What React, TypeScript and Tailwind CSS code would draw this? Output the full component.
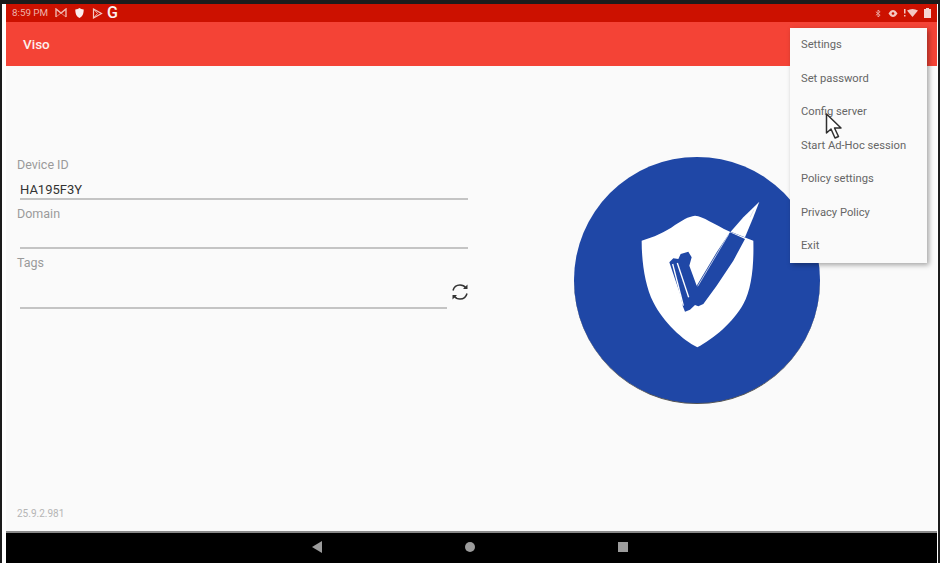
import React from "react";

const font = { fontFamily: '"Roboto", "Liberation Sans", sans-serif' };

function Field({ label, value, icon }: { label: string; value?: string; icon?: boolean }) {
  return (
    <div className="flex flex-col">
      <div className="h-[17px] pl-[11px] text-[12.5px] leading-[13px] text-[#9a9a9a]">{label}</div>
      <div className="flex items-end">
        <div className={`ml-[14px] border-b-2 border-[#c4c4c4] ${icon ? "h-[36px] w-[427px]" : "h-[25px] w-[448px]"}`}>
          {value && <div className="pt-[7px] text-[13px] leading-[16px] text-[#333333]">{value}</div>}
        </div>
        {icon && (
          <svg className="mb-[8px] ml-[5px]" width="16" height="18" viewBox="0 0 16 18" fill="none" stroke="#333" strokeWidth="1.5">
            <path d="M1 7.500C2 3.500 5 2 8 2c2.500 0 4.500 1 6 3" />
            <path d="M15 10.500C14 14.500 11 16 8 16c-2.500 0-4.500-1-6-3" />
            <path d="M15.500 1.500v4.500h-4.500z" fill="#333" stroke="none" />
            <path d="M.5 16.500V12h4.500z" fill="#333" stroke="none" />
          </svg>
        )}
      </div>
    </div>
  );
}

const menu = ["Settings", "Set password", "Config server", "Start Ad-Hoc session", "Policy settings", "Privacy Policy", "Exit"];

export default function App() {
  return (
    <div className="relative h-[563px] w-[940px] overflow-hidden border-x-2 border-t-[4px] border-[#1c1c1c] bg-white" style={font}>
      <div className="ml-[4px] mr-[1px] flex h-[559px] flex-col bg-[#fafafa]">
        <div className="flex h-[18px] items-center justify-between bg-[#cc1100] pl-[6px] pr-[6px]">
          <div className="flex items-center">
            <span className="text-[9.800px] text-[#eeb4ac]">8:59 PM</span>
            <svg className="ml-[7px]" width="12" height="10" viewBox="0 0 12 10" fill="none" stroke="#eeb4ac" strokeWidth="1.400">
              <path d="M1 9V1l5 4 5-4v8" />
              <path d="M1 1l10 8M11 1L1 9" strokeWidth=".7" />
            </svg>
            <svg className="ml-[8px]" width="9" height="10" viewBox="0 0 9 10" fill="#fbeeec">
              <path d="M4.500 0C3.500.8 2 1.300.3 1.400.3 5 1 8 4.500 10 8 8 8.700 5 8.700 1.400 7 1.300 5.500.8 4.500 0z" />
            </svg>
            <svg className="ml-[8px]" width="11" height="11" viewBox="0 0 10 11" fill="none" stroke="#f3c8c2" strokeWidth="1.200">
              <path d="M1 1l8 4.500L1 10z" />
              <path d="M1 1l4 4.500L1 10" strokeWidth=".8" />
            </svg>
            <span className="ml-[4px] text-[16px] font-medium leading-none text-[#fdf3f2]">G</span>
          </div>
          <div className="flex items-center gap-[6px]">
            <svg width="6" height="9" viewBox="0 0 7 9" fill="none" stroke="#eeb4ac" strokeWidth="1">
              <path d="M1 2.500l5 4-2.500 2V.500L6 2.500l-5 4" />
            </svg>
            <svg className="ml-[1px]" width="10" height="7" viewBox="0 0 9 7">
              <path d="M0 3.500C1.500 1 3 0 4.500 0S7.500 1 9 3.500C7.500 6 6 7 4.500 7S1.500 6 0 3.500z" fill="#f3c8c2" />
              <circle cx="4.500" cy="3.500" r="1.300" fill="#cc1100" />
            </svg>
            <svg width="14" height="8" viewBox="0 0 14 8" fill="#f3c8c2">
              <rect x="0" y="0" width="1.500" height="4.500" />
              <rect x="0" y="6" width="1.500" height="1.500" />
              <path d="M3 1.500C6.500 -.5 10.500 -.5 14 1.500L8.500 8z" />
            </svg>
            <svg width="7" height="10" viewBox="0 0 7 10" fill="#f6d6d2">
              <path d="M2 0h3v1h2v9H0V1h2z" />
            </svg>
          </div>
        </div>

        <div className="flex h-[44px] items-center bg-[#f44336] pl-[17px] pt-[1px] text-[13.500px] font-medium text-[#fdeeec]">Viso</div>

        <div className="flex min-h-0 flex-1 flex-col">
          <div className="flex flex-1">
            <div className="flex w-[480px] flex-col pt-[92px]">
              <div className="flex flex-col gap-[7px]">
                <Field label="Device ID" value="HA195F3Y" />
                <Field label="Domain" />
                <Field label="Tags" icon />
              </div>
            </div>
            <div className="ml-[88px] mt-[91px] flex h-[247px] w-[246px] items-center justify-center rounded-full border-b border-[#555] bg-[#1f47a6]">
              <svg className="ml-[6px] mt-[-12px]" width="160" height="170" viewBox="0 0 480 510">
                <path
                  d="M225 80C250 82 280 105 330 128L400 155C402 230 395 300 370 345C340 400 280 450 232 475C190 455 130 400 100 340C75 290 65 220 65 155C100 145 135 130 165 108C185 95 205 82 225 80Z"
                  fill="#fff"
                />
                <path d="M418 38L400 85L375 145L332 128L370 85Z" fill="#fff" />
                <path
                  d="M330 130L375 150L340 215L290 290L250 345L235 352L225 348L210 362L195 368L188 350L182 320L165 270L148 220L160 208L175 210L182 195L205 188L215 205L208 230L230 290L290 190Z"
                  fill="#1f47a6"
                />
                <path d="M158 225L190 350" stroke="#fff" strokeWidth="4" fill="none" />
                <path d="M172 222L206 325" stroke="#fff" strokeWidth="4" fill="none" />
                <path d="M233 292L326 136" stroke="#d7deef" strokeWidth="2.500" fill="none" />
                <path d="M402 62L390 85" stroke="#c9d2e8" strokeWidth="2" fill="none" />
              </svg>
            </div>
          </div>
          <div className="pb-[11px] pl-[11px] text-[10px] leading-[12px] text-[#b5b5b5]">25.9.2.981</div>
        </div>

        <div className="flex h-[32px] items-center justify-center border-t-2 border-[#8a8a8a] bg-black pb-[3px] pr-[3px]">
          <div className="flex w-[316px] items-center justify-between">
            <svg width="10" height="12" viewBox="0 0 10 12" fill="#9c9c9c"><path d="M10 0v12L0 6z" /></svg>
            <div className="h-[10px] w-[10px] rounded-full bg-[#9c9c9c]" />
            <div className="h-[10px] w-[10px] bg-[#9c9c9c]" />
          </div>
        </div>
      </div>

      <div className="absolute left-[788px] top-[24px] flex h-[235px] w-[137px] flex-col justify-between bg-[#fafafa] pb-[9px] pl-[11px] pt-[9px] text-[11.200px] leading-[16px] text-[#666666] shadow-[2px_2px_5px_rgba(0,0,0,0.35)]">
        {menu.map((m) => (
          <div key={m} className="whitespace-nowrap">{m}</div>
        ))}
      </div>

      <svg className="absolute left-[822px] top-[108px]" width="20" height="28" viewBox="0 0 20 28">
        <path d="M2.500 2L2.500 21L7 17L11 26L14.500 24.500L10.500 16L17 16Z" fill="#fff" stroke="#2f2f2f" strokeWidth="1.500" strokeLinejoin="round" />
      </svg>
    </div>
  );
}
